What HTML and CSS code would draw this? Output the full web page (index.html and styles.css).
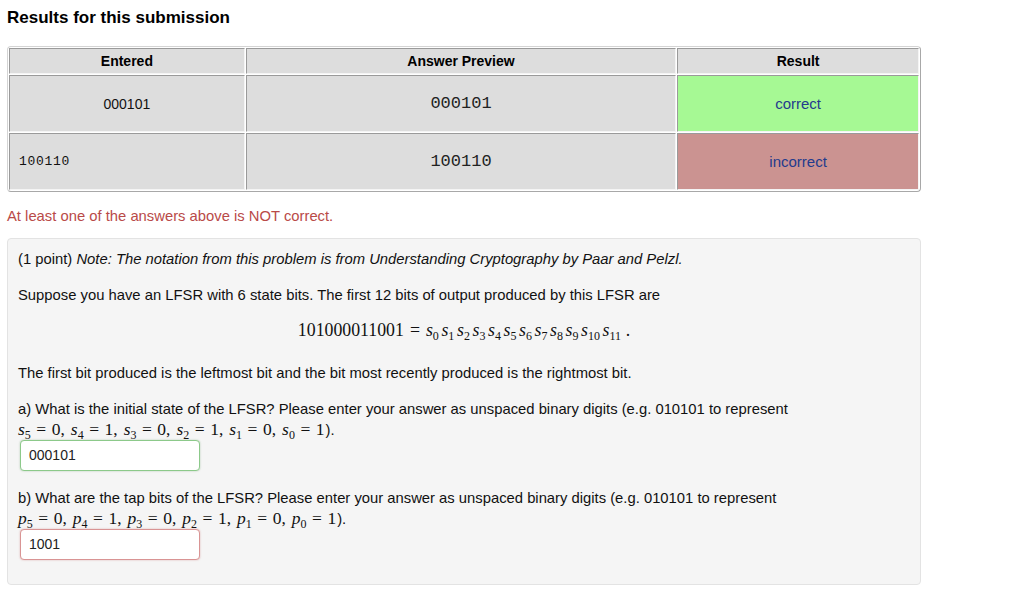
FILE: index.html
```html
<!DOCTYPE html>
<html>
<head>
<meta charset="utf-8">
<link rel="stylesheet" href="styles.css">
</head>
<body>
<div class="page">
  <h2 class="title">Results for this submission</h2>
  <table class="results">
    <tr class="head">
      <th class="c1">Entered</th>
      <th class="c2">Answer Preview</th>
      <th class="c3">Result</th>
    </tr>
    <tr class="row">
      <td>000101</td>
      <td class="preview">000101</td>
      <td class="ok">correct</td>
    </tr>
    <tr class="row">
      <td class="raw">100110</td>
      <td class="preview">100110</td>
      <td class="bad">incorrect</td>
    </tr>
  </table>
  <div class="msg">At least one of the answers above is NOT correct.</div>
  <div class="problem">
    <p class="p1">(1 point) <i>Note: The notation from this problem is from Understanding Cryptography by Paar and Pelzl.</i></p>
    <p class="p2">Suppose you have an LFSR with 6 state bits. The first 12 bits of output produced by this LFSR are</p>
    <div class="dmath"><span class="mn">101000011001</span><span class="mo">=</span><span class="v">s<sub>0</sub></span><span class="v">s<sub>1</sub></span><span class="v">s<sub>2</sub></span><span class="v">s<sub>3</sub></span><span class="v">s<sub>4</sub></span><span class="v">s<sub>5</sub></span><span class="v">s<sub>6</sub></span><span class="v">s<sub>7</sub></span><span class="v">s<sub>8</sub></span><span class="v">s<sub>9</sub></span><span class="v">s<sub>10</sub></span><span class="v">s<sub>11</sub></span><span class="dot">.</span></div>
    <p class="p3">The first bit produced is the leftmost bit and the bit most recently produced is the rightmost bit.</p>
    <p class="p4">a) What is the initial state of the LFSR? Please enter your answer as unspaced binary digits (e.g. 010101 to represent</p>
    <div class="imath"><span class="v">s<sub>5</sub></span><span class="mo">=</span><span class="mn">0</span><span class="cm">,</span><span class="v">s<sub>4</sub></span><span class="mo">=</span><span class="mn">1</span><span class="cm">,</span><span class="v">s<sub>3</sub></span><span class="mo">=</span><span class="mn">0</span><span class="cm">,</span><span class="v">s<sub>2</sub></span><span class="mo">=</span><span class="mn">1</span><span class="cm">,</span><span class="v">s<sub>1</sub></span><span class="mo">=</span><span class="mn">0</span><span class="cm">,</span><span class="v">s<sub>0</sub></span><span class="mo">=</span><span class="mn">1</span><span class="tail">).</span></div>
    <div class="answer good">000101</div>
    <p class="p5">b) What are the tap bits of the LFSR? Please enter your answer as unspaced binary digits (e.g. 010101 to represent</p>
    <div class="imath"><span class="v">p<sub>5</sub></span><span class="mo">=</span><span class="mn">0</span><span class="cm">,</span><span class="v">p<sub>4</sub></span><span class="mo">=</span><span class="mn">1</span><span class="cm">,</span><span class="v">p<sub>3</sub></span><span class="mo">=</span><span class="mn">0</span><span class="cm">,</span><span class="v">p<sub>2</sub></span><span class="mo">=</span><span class="mn">1</span><span class="cm">,</span><span class="v">p<sub>1</sub></span><span class="mo">=</span><span class="mn">0</span><span class="cm">,</span><span class="v">p<sub>0</sub></span><span class="mo">=</span><span class="mn">1</span><span class="tail">).</span></div>
    <div class="answer wrong">1001</div>
  </div>
</div>
</body>
</html>
```

FILE: styles.css
```css
html, body {
  margin: 0;
  padding: 0;
  background: #ffffff;
}
body {
  font-family: "Liberation Sans", Arial, sans-serif;
  font-size: 14.8px;
  color: #111;
}
.page {
  padding: 8px 0 0 7px;
  width: 914px;
}
.title {
  margin: 0 0 18px 0;
  font-size: 17px;
  line-height: 20px;
  font-weight: bold;
  color: #000;
}
.results {
  width: 914px;
  border-collapse: separate;
  border-spacing: 1px;
  border: 1px solid #d4d4d4;
  border-right-color: #a8a8a8;
  border-bottom-color: #a8a8a8;
  border-radius: 4px;
  margin: 0;
}
.results th, .results td {
  background: #dddddd;
  text-align: center;
  vertical-align: middle;
  padding: 0 5px;
  border-top: 1px solid #9a9a9a;
  border-left: 1px solid #9a9a9a;
  border-right: 1px solid #f4f4f4;
  border-bottom: 1px solid #f4f4f4;
}
.results th {
  font-weight: bold;
  color: #000;
  height: 24px;
  font-size: 14px;
}
.results .c1 { width: 224px; }
.results .c2 { width: 419px; }
.results .c3 { width: 230px; }
.results .row td {
  height: 55px;
  font-size: 14px;
  color: #111;
}
.results td.raw {
  text-align: left;
  padding-left: 9px;
  font-family: "Liberation Mono", "Courier New", monospace;
  font-size: 13px;
  letter-spacing: 0.7px;
  color: #111;
}
.results td.preview {
  font-family: "Liberation Mono", "Courier New", monospace;
  font-size: 17px;
  color: #222;
}
.results td.ok {
  background: #a6f994;
  color: #233b8d;
  font-size: 15px;
}
.results td.bad {
  background: #cb9391;
  color: #233b8d;
  font-size: 15px;
}
.msg {
  margin: 15px 0 13px 0;
  line-height: 18px;
  color: #b94a48;
}
.problem {
  background: #f5f5f5;
  border: 1px solid #e3e3e3;
  border-radius: 4px;
  padding: 11px 10px 24px 10px;
  line-height: 18px;
  color: #111;
}
.problem p {
  margin: 0;
}
.p2 { margin-top: 18px !important; }
.dmath {
  margin-top: 15px;
  height: 22px;
  line-height: 22px;
  text-align: center;
  font-family: "Liberation Serif", "Times New Roman", serif;
  font-size: 17.8px;
  color: #111;
}
.dmath .mo { margin: 0 6px; }
.dmath .v { margin-right: 2.6px; }
.dmath .dot { margin-left: 2px; }
.v {
  font-style: italic;
}
.v sub {
  font-style: normal;
  font-size: 12px;
  vertical-align: -4px;
  line-height: 0;
}
.p3 { margin-top: 23px !important; }
.p4 { margin-top: 18px !important; }
.p5 { margin-top: 18px !important; }
.imath {
  height: 22px;
  line-height: 22px;
  font-family: "Liberation Serif", "Times New Roman", serif;
  font-size: 17.5px;
  color: #111;
}
.imath .mo { margin: 0 5.5px; }
.imath .cm { margin-right: 6px; }
.imath .tail { font-family: "Liberation Sans", Arial, sans-serif; font-size: 14.8px; margin-left: 1px; }
.answer {
  margin-left: 2px;
  height: 29px;
  border-radius: 4px;
  background: #fff;
  box-sizing: content-box;
  padding: 0 0 0 8px;
  width: 170px;
  line-height: 29px;
  font-size: 14px;
  color: #222;
}
.answer.good {
  border: 1px solid #8cc98a;
  box-shadow: 0 0 2px rgba(70, 136, 71, 0.4);
}
.answer.wrong {
  border: 1px solid #d99494;
  box-shadow: 0 0 2px rgba(185, 74, 72, 0.4);
}
```
